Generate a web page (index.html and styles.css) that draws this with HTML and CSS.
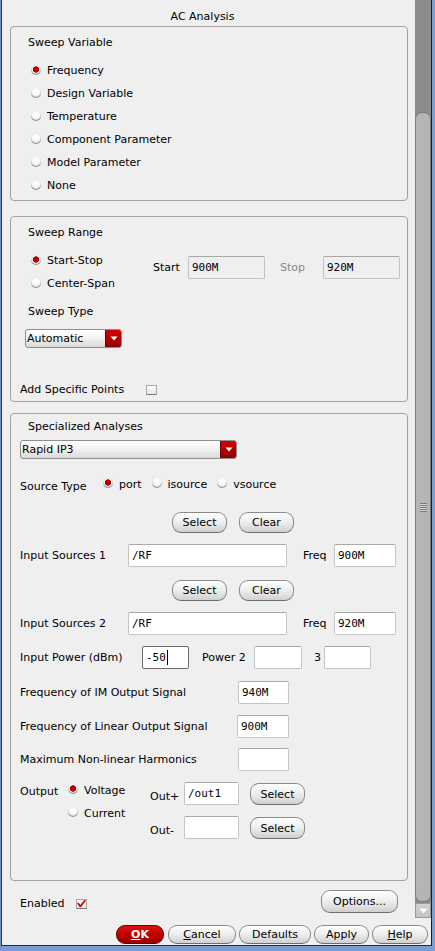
FILE: index.html
```html
<!DOCTYPE html>
<html>
<head>
<meta charset="utf-8">
<link rel="stylesheet" href="styles.css">
</head>
<body>
<div class="frame">
  <div class="window">
    <div class="upper">
      <div class="content">
        <div class="title">AC Analysis</div>

        <section class="group g-var">
          <div class="gtitle">Sweep Variable</div>
          <div class="radios">
            <div class="opt"><span class="radio on"></span>Frequency</div>
            <div class="opt"><span class="radio"></span>Design Variable</div>
            <div class="opt"><span class="radio"></span>Temperature</div>
            <div class="opt"><span class="radio"></span>Component Parameter</div>
            <div class="opt"><span class="radio"></span>Model Parameter</div>
            <div class="opt"><span class="radio"></span>None</div>
          </div>
        </section>

        <section class="group g-range">
          <div class="gtitle">Sweep Range</div>
          <div class="range-row">
            <div class="radios range-radios">
              <div class="opt"><span class="radio on"></span>Start-Stop</div>
              <div class="opt"><span class="radio"></span>Center-Span</div>
            </div>
            <span class="lbl start-lbl">Start</span>
            <div class="field ro w77">900M</div>
            <span class="lbl stop-lbl">Stop</span>
            <div class="field ro w77">920M</div>
          </div>
          <div class="gtitle sub">Sweep Type</div>
          <div class="combo combo-auto">
            <span class="combo-text">Automatic</span>
            <span class="combo-arrow"><svg width="8" height="5" viewBox="0 0 8 5"><path d="M0.5 0.5 H7.5 L4 4.5 Z" fill="#fff"/></svg></span>
          </div>
          <div class="add-row">Add Specific Points<span class="check"></span></div>
        </section>

        <section class="group g-spec">
          <div class="gtitle spec-title">Specialized Analyses</div>
          <div class="combo combo-rapid">
            <span class="combo-text">Rapid IP3</span>
            <span class="combo-arrow"><svg width="8" height="5" viewBox="0 0 8 5"><path d="M0.5 0.5 H7.5 L4 4.5 Z" fill="#fff"/></svg></span>
          </div>

          <div class="src-row">
            <span class="src-lbl">Source Type</span>
            <div class="opt-inline"><span class="radio on"></span>port</div>
            <div class="opt-inline"><span class="radio"></span>isource</div>
            <div class="opt-inline"><span class="radio"></span>vsource</div>
          </div>

          <div class="btn-row first">
            <button class="btn w55">Select</button>
            <button class="btn w55">Clear</button>
          </div>

          <div class="frow r-in1">
            <span class="lbl w108">Input Sources 1</span>
            <div class="field w159">/RF</div>
            <span class="lbl freq-lbl">Freq</span>
            <div class="field w62">900M</div>
          </div>

          <div class="btn-row second">
            <button class="btn w55">Select</button>
            <button class="btn w55">Clear</button>
          </div>

          <div class="frow r-in2">
            <span class="lbl w108">Input Sources 2</span>
            <div class="field w159">/RF</div>
            <span class="lbl freq-lbl">Freq</span>
            <div class="field w62">920M</div>
          </div>

          <div class="frow r-pow">
            <span class="lbl w122">Input Power (dBm)</span>
            <div class="field focus w47">-50<span class="caret"></span></div>
            <span class="lbl pow2-lbl">Power 2</span>
            <div class="field w48"></div>
            <span class="lbl three-lbl">3</span>
            <div class="field w47"></div>
          </div>

          <div class="frow r-im">
            <span class="lbl w218">Frequency of IM Output Signal</span>
            <div class="field w51">940M</div>
          </div>

          <div class="frow r-lin">
            <span class="lbl w217">Frequency of Linear Output Signal</span>
            <div class="field w52">900M</div>
          </div>

          <div class="frow r-max">
            <span class="lbl w218">Maximum Non-linear Harmonics</span>
            <div class="field w51"></div>
          </div>

          <div class="out-sec">
            <span class="out-lbl">Output</span>
            <div class="out-radios">
              <div class="opt-s"><span class="radio on"></span>Voltage</div>
              <div class="opt-s second"><span class="radio"></span>Current</div>
            </div>
            <div class="out-grid">
              <span class="olbl">Out+</span>
              <div class="field w55">/out1</div>
              <button class="btn osel">Select</button>
              <span class="olbl">Out-</span>
              <div class="field w55"></div>
              <button class="btn osel">Select</button>
            </div>
          </div>
        </section>

        <div class="enabled-row">
          <span class="en-lbl">Enabled</span>
          <span class="check checked"><svg width="11" height="10" viewBox="0 0 11 10"><path d="M1.5 4.5 L4 8 L9.5 1" fill="none" stroke="#d00000" stroke-width="2.2" stroke-linecap="round" stroke-linejoin="round"/></svg></span>
          <button class="btn options">Options...</button>
        </div>
      </div>

      <div class="scrollbar">
        <div class="thumb"><span class="grip"></span></div>
        <div class="arrow-down"><svg width="9" height="6" viewBox="0 0 9 6"><path d="M0.5 0.5 H8.5 L4.5 5.5 Z" fill="#fff"/></svg></div>
      </div>
    </div>

    <div class="footer">
      <button class="btn fbtn ok"><u>O</u>K</button>
      <button class="btn fbtn cancel"><u>C</u>ancel</button>
      <button class="btn fbtn defaults">Defaults</button>
      <button class="btn fbtn apply">Apply</button>
      <button class="btn fbtn help"><u>H</u>elp</button>
    </div>
  </div>
</div>
</body>
</html>
```
FILE: styles.css
```css
* { box-sizing: border-box; }
html, body { margin: 0; padding: 0; }
body {
  width: 435px;
  height: 951px;
  overflow: hidden;
  background: #efefef;
  font-family: "DejaVu Sans", sans-serif;
  font-size: 11px;
  color: #000;
}
.frame {
  width: 435px;
  height: 951px;
  border-left: 1px solid #6d8ecb;
  border-right: 3px solid #7b9cd6;
  border-bottom: 5px solid #7b9cd6;
}
.window {
  height: 946px;
  border-left: 1px solid #3c3c3c;
  border-right: 1px solid #1c1c1c;
  border-bottom: 1px solid #2c2c2c;
  background: #efefef;
  display: flex;
  flex-direction: column;
}
.upper {
  height: 918px;
  display: flex;
}
.content {
  flex: 1;
  display: flex;
  flex-direction: column;
}
.title {
  height: 26px;
  padding-top: 9px;
  padding-right: 12px;
  line-height: 16px;
  text-align: center;
}
.group {
  border: 1px solid #a2a2a2;
  border-radius: 4px;
  margin: 0 7px 0 8px;
  display: flex;
  flex-direction: column;
  align-items: flex-start;
  flex: none;
}
.g-var { height: 175px; }
.g-range { height: 186px; margin-top: 15px; }
.g-spec { height: 468px; margin-top: 11px; }

.gtitle {
  margin: 8px 0 0 17px;
  line-height: 16px;
}
.gtitle.sub { margin-top: 9px; }
.gtitle.spec-title { margin-top: 5px; }

.radios { margin: 8px 0 0 20px; }
.opt {
  display: flex;
  align-items: center;
  height: 23px;
}
.radio {
  flex: none;
  width: 10px;
  height: 10px;
  border-radius: 50%;
  margin-right: 6px;
  margin-bottom: 2px;
  background: radial-gradient(circle at 50% 35%, #ffffff 0, #f7f7f7 45%, #e2e2e2 80%, #c8c8c8 100%);
  box-shadow: inset 0 -1px 1px #8d8d8d;
}
.radio.on {
  background: radial-gradient(circle at 50% 45%, #e00000 0, #c80000 1.6px, #8a0000 2.9px, #f4f4f4 3.4px, #e4e4e4 80%, #c8c8c8 100%);
}

.range-row {
  display: flex;
  align-items: flex-start;
  margin-top: 8px;
}
.range-radios { width: 142px; margin-top: 0; padding-left: 20px; margin-left: 0; }
.lbl { line-height: 23px; white-space: nowrap; flex: none; }
.start-lbl { width: 35px; margin-top: 7px; }
.stop-lbl { width: 43px; margin-left: 15px; margin-top: 7px; color: #8a8a8a; }

.field {
  flex: none;
  height: 23px;
  border: 1px solid #c4c4c4;
  border-top-color: #a9a9a9;
  border-radius: 2px;
  background: #fff;
  font-family: "DejaVu Sans Mono", monospace;
  font-size: 11px;
  line-height: 22px;
  padding-left: 3px;
  white-space: nowrap;
}
.range-row .field { margin-top: 7px; }
.field.ro { background: #efefef; border-color: #c2c2c2; border-top-color: #a8a8a8; }
.field.focus { border: 1px solid #6a6a6a; }
.caret {
  display: inline-block;
  width: 1px;
  height: 15px;
  background: #000;
  vertical-align: -4px;
  margin-left: 1px;
}
.w47 { width: 47px; }
.w48 { width: 48px; }
.w51 { width: 51px; }
.w52 { width: 52px; }
.w55 { width: 55px; }
.w62 { width: 62px; }
.w77 { width: 77px; }
.w159 { width: 159px; }

.combo {
  display: flex;
  height: 19px;
  border: 1px solid #8e8e8e;
  border-radius: 3px;
  background: linear-gradient(#ffffff, #f2f2f2 45%, #d9d9d9);
  overflow: hidden;
}
.combo-text {
  flex: 1;
  line-height: 17px;
  padding-left: 1px;
}
.combo-arrow {
  width: 16px;
  display: flex;
  align-items: center;
  justify-content: center;
  background: linear-gradient(#d60000, #b30000 50%, #8e0000);
  border-left: 1px solid #7a0000;
}
.combo-auto { width: 97px; margin: 9px 0 0 14px; }
.combo-rapid { width: 217px; margin: 5px 0 0 9px; }

.add-row {
  display: flex;
  align-items: center;
  margin: 34px 0 0 9px;
  line-height: 16px;
}
.check {
  display: inline-flex;
  align-items: center;
  justify-content: center;
  width: 11px;
  height: 10px;
  margin-left: 22px;
  border: 1px solid #a8a8a8;
  border-bottom-color: #7a7a7a;
  background: linear-gradient(#ffffff, #e6e6e6);
}

.src-row {
  display: flex;
  align-items: center;
  height: 20px;
  margin: 15px 0 0 9px;
}
.src-lbl { width: 83px; margin-top: 4px; }
.opt-inline {
  display: flex;
  align-items: center;
  margin-right: 10px;
}

.btn {
  flex: none;
  font-family: "DejaVu Sans", sans-serif;
  font-size: 11px;
  color: #000;
  height: 21px;
  padding: 0;
  border: 1px solid #8a8a8a;
  border-bottom-color: #6e6e6e;
  border-radius: 9px;
  background: linear-gradient(#fdfdfd, #efefef 45%, #dcdcdc 80%, #cfcfcf);
  box-shadow: inset 0 1px 0 #ffffff;
  line-height: 19px;
  text-align: center;
}
.btn-row {
  display: flex;
  gap: 12px;
  margin-left: 161px;
}
.btn-row.first { margin-top: 18px; }
.btn-row.second { margin-top: 13px; }

.frow {
  display: flex;
  align-items: center;
  margin-left: 9px;
}
.r-in1 { margin-top: 11px; }
.r-in2 { margin-top: 11px; }
.r-pow { margin-top: 11px; }
.r-im { margin-top: 12px; }
.r-lin { margin-top: 11px; }
.r-max { margin-top: 10px; }
.w108 { width: 108px; }
.w122 { width: 122px; }
.w217 { width: 217px; }
.w218 { width: 218px; }
.freq-lbl { width: 31px; margin-left: 16px; }
.pow2-lbl { width: 52px; margin-left: 13px; }
.three-lbl { width: 10px; margin-left: 12px; }

.out-sec {
  display: flex;
  align-items: flex-start;
  margin: 11px 0 0 9px;
}
.out-lbl { width: 48px; line-height: 16px; padding-top: 2px; }
.out-radios { width: 82px; }
.opt-s { display: flex; align-items: center; height: 16px; }
.opt-s.second { margin-top: 7px; }
.out-grid {
  display: grid;
  grid-template-columns: 34px 55px 66px;
  grid-template-rows: 23px 23px;
  row-gap: 11px;
}
.olbl { align-self: end; line-height: 16px; }
.osel { align-self: end; justify-self: end; height: 22px; width: 55px; }

.enabled-row {
  display: flex;
  align-items: center;
  height: 23px;
  margin: 9px 17px 0 18px;
}
.en-lbl { margin-top: 5px; line-height: 16px; }
.enabled-row .check { margin-left: 12px; margin-top: 4px; }
.options { margin-left: auto; width: 77px; height: 23px; line-height: 21px; }

.scrollbar {
  width: 16px;
  flex: none;
  background: #8b8b8b;
  display: flex;
  flex-direction: column;
}
.thumb {
  margin-top: 112px;
  height: 790px;
  background: #b5b5b5;
  border: 1px solid #7c7c7c;
  border-radius: 7px;
  display: flex;
  align-items: center;
  justify-content: center;
}
.grip {
  width: 7px;
  height: 9px;
  background: repeating-linear-gradient(#7a7a7a 0, #7a7a7a 1px, #d0d0d0 1px, #d0d0d0 2px);
}
.arrow-down {
  margin-top: 1px;
  height: 15px;
  background: linear-gradient(#d2d2d2, #c2c2c2);
  border: 1px solid #9a9a9a;
  display: flex;
  align-items: center;
  justify-content: center;
}

.footer {
  height: 27px;
  display: flex;
  justify-content: flex-end;
  align-items: flex-start;
  gap: 3px;
  padding: 7px 3px 0 0;
}
.fbtn { height: 19px; line-height: 17px; font-size: 11px; }
.ok {
  width: 48px;
  color: #fff;
  font-weight: bold;
  background: linear-gradient(#e01010, #c00000 50%, #960000);
  border-color: #6a0000;
  box-shadow: none;
}
.cancel { width: 68px; margin-left: 1px; }
.defaults { width: 72px; }
.apply { width: 55px; }
.help { width: 56px; }
```
